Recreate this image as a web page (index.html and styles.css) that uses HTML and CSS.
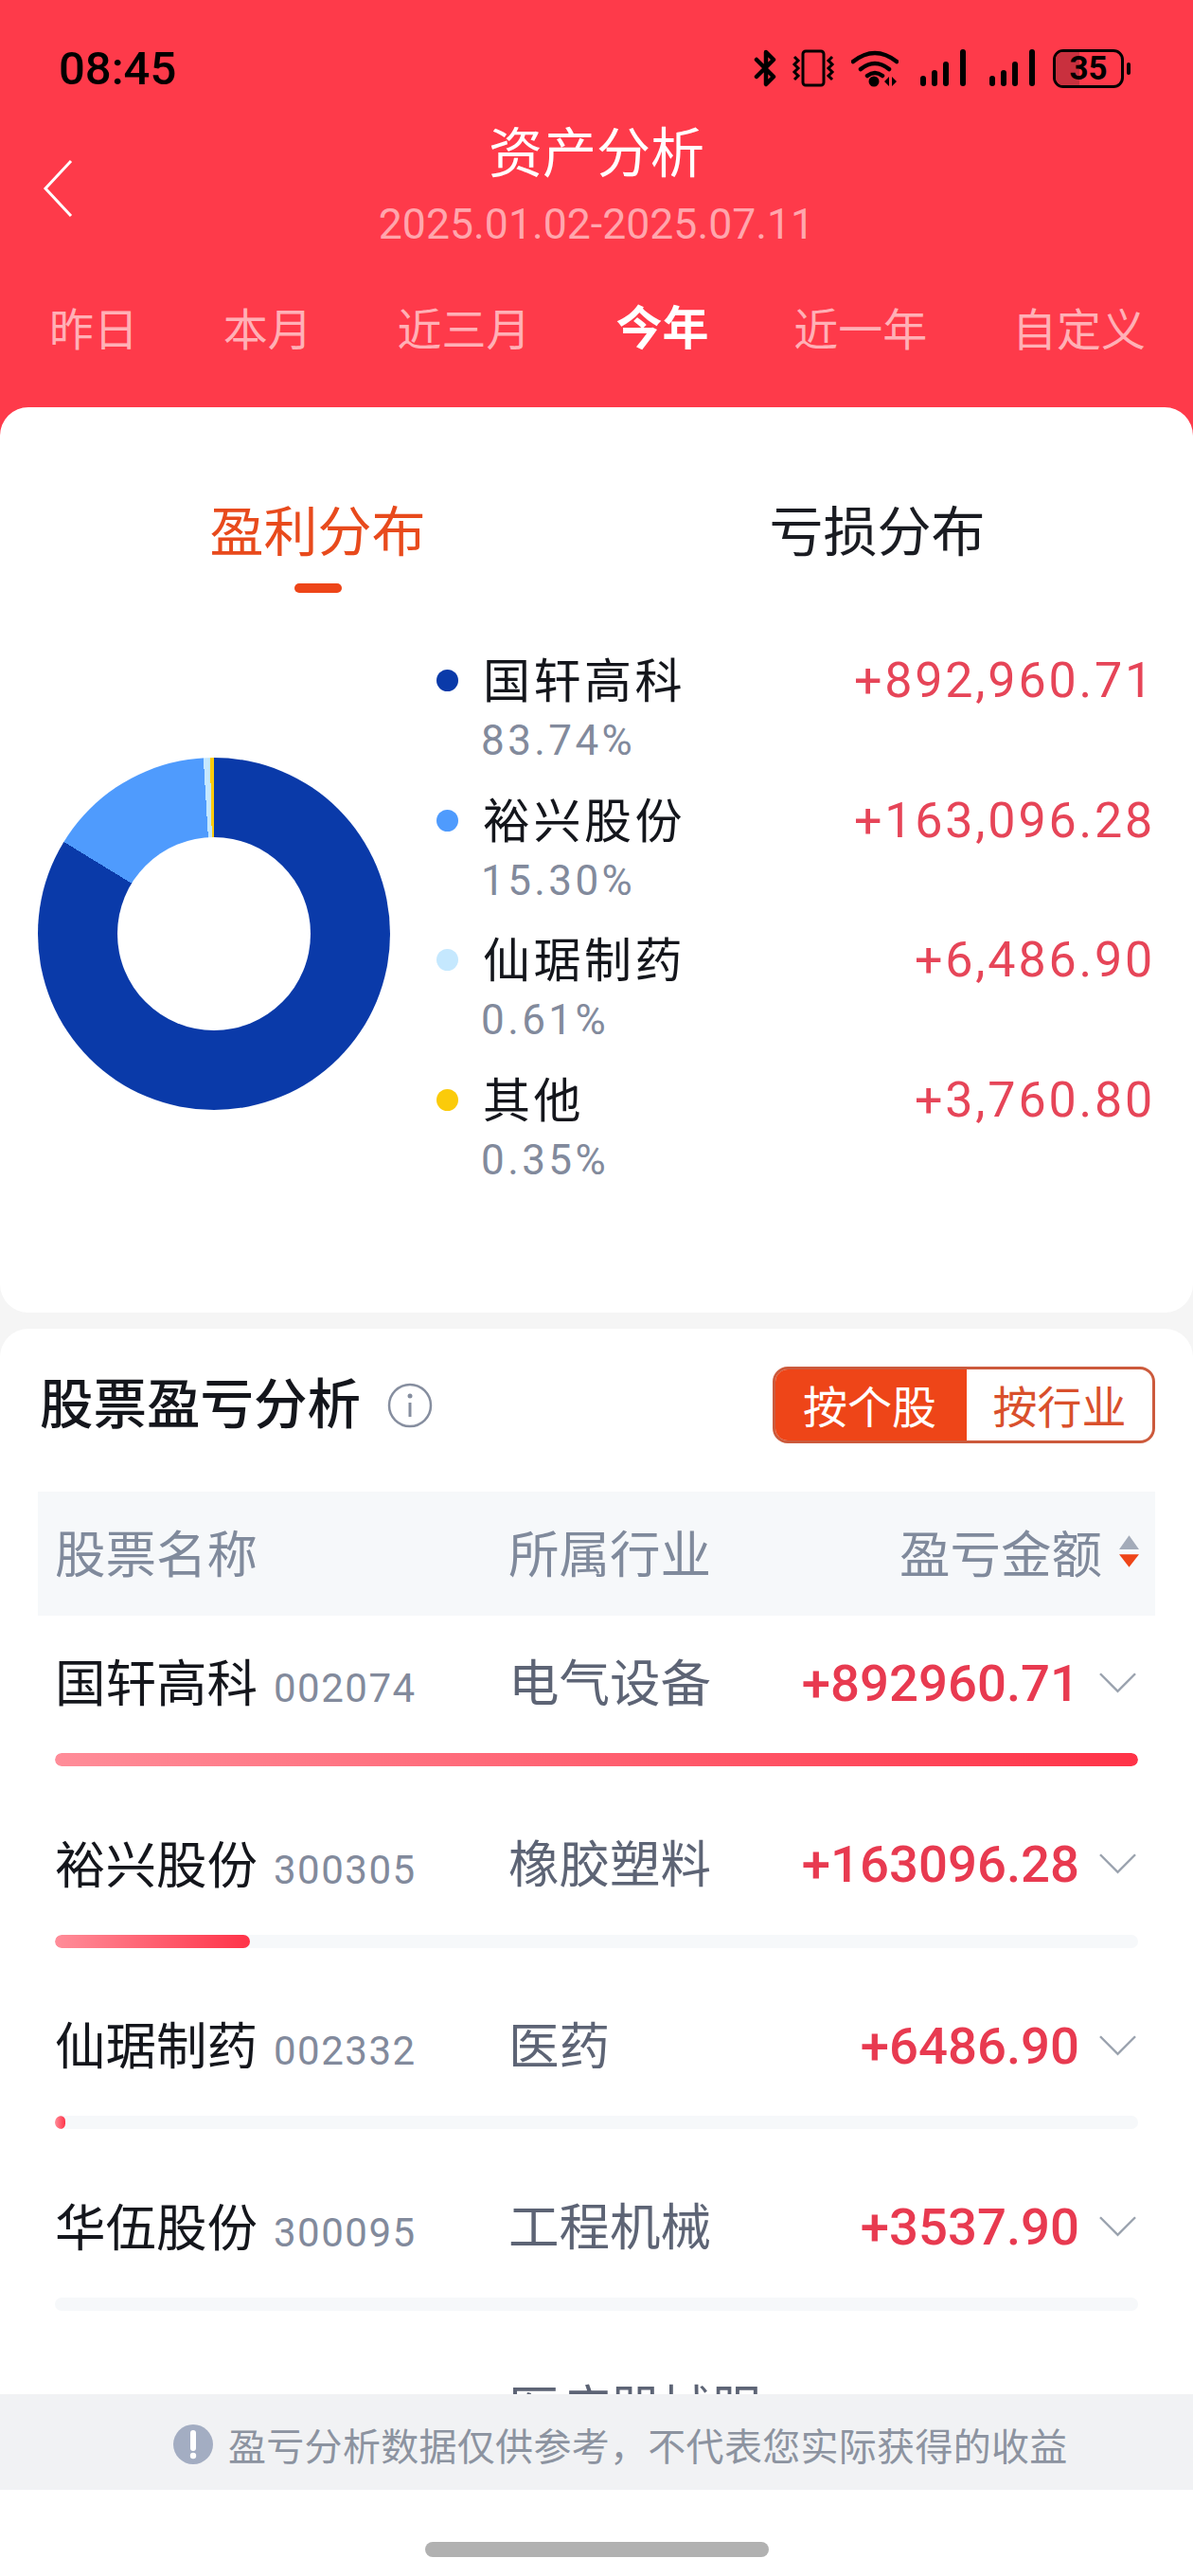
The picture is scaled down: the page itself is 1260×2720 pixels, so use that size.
FILE: index.html
```html
<!DOCTYPE html>
<html lang="zh-CN">
<head>
    <meta charset="UTF-8">
    <meta name="viewport" content="width=device-width, initial-scale=1.0">
    <title>资产分析</title>
    <link rel="stylesheet" href="styles.css">
</head>
<body>
    <div class="app">
        <header class="top">
            <div class="status-bar">
                <span class="clock">08:45</span>
                <div class="status-icons">
                    <svg class="ico-bt" viewBox="0 0 26 40"><path d="M3 11 L21 29 L13 37 V3 L21 11 L3 29" fill="none" stroke="#000" stroke-width="4.5" stroke-linejoin="round" stroke-linecap="round"/></svg>
                    <svg class="ico-vib" viewBox="0 0 46 40"><rect x="12" y="2" width="22" height="36" rx="3" fill="none" stroke="#000" stroke-width="3"/><path d="M3 8 L7 12 L3 16 L7 20 L3 24 L7 28 L3 32 M43 8 L39 12 L43 16 L39 20 L43 24 L39 28 L43 32" fill="none" stroke="#000" stroke-width="3"/></svg>
                    <svg class="ico-wifi" viewBox="0 0 50 40"><path d="M2 13 Q25 -5 48 13 M10 21 Q25 9 40 21 M17 28 Q25 22 33 28" fill="none" stroke="#000" stroke-width="4.5" stroke-linecap="round"/><circle cx="24" cy="34" r="5.5"/><path d="M35 34 L40 29 V39 Z M43 29 L48 34 L43 39 Z"/></svg>
                    <svg class="ico-sig" viewBox="0 0 49 40"><g fill="none" stroke="#000" stroke-width="6" stroke-linecap="round"><path d="M3 31 V36"/><path d="M15 25 V36"/><path d="M27 16 V36"/><path d="M45 3 V36"/></g></svg>
                    <svg class="ico-sig" viewBox="0 0 49 40"><g fill="none" stroke="#000" stroke-width="6" stroke-linecap="round"><path d="M3 31 V36"/><path d="M15 25 V36"/><path d="M27 16 V36"/><path d="M45 3 V36"/></g></svg>
                    <div class="battery"><i class="battery-fill"></i><span>35</span></div>
                    <i class="battery-tip"></i>
                </div>
            </div>
            <div class="nav">
                <svg class="back" viewBox="0 0 32 62"><path d="M30 2 L3 31 L30 60" fill="none" stroke="#fff" stroke-width="3"/></svg>
                <h1>资产分析</h1>
                <div class="range">2025.01.02-2025.07.11</div>
            </div>
            <div class="periods">
                <span>昨日</span>
                <span>本月</span>
                <span>近三月</span>
                <span class="on">今年</span>
                <span>近一年</span>
                <span>自定义</span>
            </div>
        </header>

        <section class="card dist">
            <div class="dist-tabs">
                <div class="dist-tab on">盈利分布</div>
                <div class="dist-tab">亏损分布</div>
            </div>
            <div class="dist-body">
                <div class="donut"></div>
                <ul class="legend">
                    <li>
                        <i class="dot c1"></i>
                        <div class="legend-text"><b>国轩高科</b><small>83.74%</small></div>
                        <span class="legend-val">+892,960.71</span>
                    </li>
                    <li>
                        <i class="dot c2"></i>
                        <div class="legend-text"><b>裕兴股份</b><small>15.30%</small></div>
                        <span class="legend-val">+163,096.28</span>
                    </li>
                    <li>
                        <i class="dot c3"></i>
                        <div class="legend-text"><b>仙琚制药</b><small>0.61%</small></div>
                        <span class="legend-val">+6,486.90</span>
                    </li>
                    <li>
                        <i class="dot c4"></i>
                        <div class="legend-text"><b>其他</b><small>0.35%</small></div>
                        <span class="legend-val">+3,760.80</span>
                    </li>
                </ul>
            </div>
        </section>

        <section class="card stocks">
            <div class="stocks-head">
                <h2>股票盈亏分析</h2>
                <svg class="info" viewBox="0 0 48 48"><circle cx="24" cy="24" r="22" fill="none" stroke="#868e9f" stroke-width="2.5"/><circle cx="24" cy="14" r="2.5" fill="#868e9f"/><path d="M24 21 V36" stroke="#868e9f" stroke-width="3"/></svg>
                <div class="toggle">
                    <span class="on">按个股</span>
                    <span>按行业</span>
                </div>
            </div>
            <div class="thead">
                <span class="col-name">股票名称</span>
                <span class="col-ind">所属行业</span>
                <span class="col-amt">盈亏金额
                    <svg class="sort" viewBox="0 0 22 34"><path d="M11 1 L21 15 H1 Z" fill="#a3abb9"/><path d="M1 20 H21 L11 33 Z" fill="#ee4518"/></svg>
                </span>
            </div>

            <div class="row">
                <div class="row-main">
                    <span class="col-name">国轩高科<em>002074</em></span>
                    <span class="col-ind">电气设备</span>
                    <span class="col-amt"><strong>+892960.71</strong><svg class="chev" viewBox="0 0 40 22"><path d="M1 1 L20 20 L39 1" fill="none" stroke="#9aa2ae" stroke-width="2.5"/></svg></span>
                </div>
                <div class="bar"><div class="bar-fill" style="width:100%"></div></div>
            </div>
            <div class="row">
                <div class="row-main">
                    <span class="col-name">裕兴股份<em>300305</em></span>
                    <span class="col-ind">橡胶塑料</span>
                    <span class="col-amt"><strong>+163096.28</strong><svg class="chev" viewBox="0 0 40 22"><path d="M1 1 L20 20 L39 1" fill="none" stroke="#9aa2ae" stroke-width="2.5"/></svg></span>
                </div>
                <div class="bar"><div class="bar-fill" style="width:18%"></div></div>
            </div>
            <div class="row">
                <div class="row-main">
                    <span class="col-name">仙琚制药<em>002332</em></span>
                    <span class="col-ind">医药</span>
                    <span class="col-amt"><strong>+6486.90</strong><svg class="chev" viewBox="0 0 40 22"><path d="M1 1 L20 20 L39 1" fill="none" stroke="#9aa2ae" stroke-width="2.5"/></svg></span>
                </div>
                <div class="bar"><div class="bar-fill" style="width:1%"></div></div>
            </div>
            <div class="row">
                <div class="row-main">
                    <span class="col-name">华伍股份<em>300095</em></span>
                    <span class="col-ind">工程机械</span>
                    <span class="col-amt"><strong>+3537.90</strong><svg class="chev" viewBox="0 0 40 22"><path d="M1 1 L20 20 L39 1" fill="none" stroke="#9aa2ae" stroke-width="2.5"/></svg></span>
                </div>
                <div class="bar"></div>
            </div>
            <div class="row">
                <div class="row-main">
                    <span class="col-name"></span>
                    <span class="col-ind">医疗器械服</span>
                </div>
            </div>
        </section>

        <div class="notice">
            <svg class="notice-ico" viewBox="0 0 42 42"><circle cx="21" cy="21" r="21" fill="#a3adc2"/><path d="M21 9 V25" stroke="#fff" stroke-width="6" stroke-linecap="round"/><circle cx="21" cy="33" r="3.2" fill="#fff"/></svg>
            <span>盈亏分析数据仅供参考，不代表您实际获得的收益</span>
        </div>
        <div class="home-area"><i class="home-bar"></i></div>
    </div>
</body>
</html>
```

FILE: styles.css
```css
* {
    box-sizing: border-box;
}
body {
    margin: 0;
    background-color: #f5f5f5;
    font-family: "Noto Sans CJK SC", Roboto, sans-serif;
}
ul {
    list-style: none;
    margin: 0;
    padding: 0;
}
.app {
    position: relative;
    width: 1260px;
    height: 2720px;
    overflow: hidden;
    background-color: #f5f5f5;
}

/* red header */
.top {
    height: 460px;
    background-color: #fe3a4a;
    color: #fff;
}
.status-bar {
    display: flex;
    align-items: center;
    justify-content: space-between;
    height: 92px;
    padding: 52px 66px 0 62px;
}
.clock {
    font-family: Roboto, sans-serif;
    font-size: 49px;
    font-weight: 500;
    color: #000;
}
.status-icons {
    display: flex;
    align-items: center;
}
.status-icons svg {
    height: 40px;
    display: block;
}
.ico-bt { width: 26px; margin-right: 14px; }
.ico-vib { width: 46px; margin-right: 17px; }
.ico-wifi { width: 50px; margin-right: 23px; }
.ico-sig { width: 49px; margin-right: 24px; }
.ico-sig + .battery { margin-left: -6px; }
.battery {
    position: relative;
    width: 75px;
    height: 41px;
    border: 3px solid #000;
    border-radius: 11px;
    overflow: hidden;
    text-align: center;
    font-family: Roboto, sans-serif;
    font-size: 35px;
    font-weight: 700;
    line-height: 35px;
    color: #000;
}
.battery span {
    position: relative;
}
.battery-fill {
    position: absolute;
    left: 0;
    top: 0;
    bottom: 0;
    width: 25px;
    background-color: #c9303e;
}
.battery-tip {
    width: 4px;
    height: 13px;
    margin-left: 3px;
    border-radius: 2px;
    background-color: #000;
}
.nav {
    position: relative;
    text-align: center;
    padding-top: 33px;
}
.nav h1 {
    margin: 0;
    font-size: 57px;
    font-weight: 400;
    line-height: 64px;
}
.back {
    position: absolute;
    left: 45px;
    top: 76px;
    width: 32px;
    height: 62px;
}
.range {
    margin-top: 22px;
    font-family: Roboto, sans-serif;
    font-size: 44.6px;
    line-height: 52px;
    color: #ffa6ad;
}
.periods {
    display: flex;
    justify-content: space-between;
    align-items: center;
    padding: 48px 50px 0 52px;
    font-size: 47px;
    line-height: 64px;
    color: #ffb0b6;
}
.periods .on {
    margin-bottom: 4px;
    font-size: 49px;
    font-weight: 700;
    color: #fff;
}

/* cards */
.card {
    background-color: #fff;
    border-radius: 30px;
}
.dist {
    height: 956px;
    margin-top: -30px;
}
.dist-tabs {
    display: flex;
    padding: 85px 38px 0 40px;
}
.dist-tab {
    flex: 1;
    text-align: center;
    font-size: 57px;
    line-height: 84px;
    color: #1a1c22;
}
.dist-tab.on {
    position: relative;
    color: #e84a1c;
}
.dist-tab.on::after {
    content: "";
    position: absolute;
    left: 50%;
    top: 101px;
    width: 50px;
    height: 10px;
    margin-left: -25px;
    border-radius: 5px;
    background-color: #ee4518;
}
.dist-body {
    display: flex;
    padding: 0 40px;
}
.donut {
    flex: none;
    position: relative;
    width: 372px;
    height: 372px;
    margin-top: 201px;
    border-radius: 50%;
    background: conic-gradient(#0a3aa9 0 83.74%, #4f9bfd 83.74% 99.04%, #c5e8fe 99.04% 99.65%, #fbcb0a 99.65% 100%);
}
.donut::after {
    content: "";
    position: absolute;
    left: 84px;
    top: 84px;
    width: 204px;
    height: 204px;
    border-radius: 50%;
    background-color: #fff;
}
.legend {
    flex: 1;
    padding: 80px 0 0 49px;
}
.legend li {
    display: flex;
    height: 147.5px;
}
.dot {
    flex: none;
    width: 23px;
    height: 23px;
    margin-top: 28px;
    margin-right: 26px;
    border-radius: 50%;
}
.c1 { background-color: #0a3aa9; }
.c2 { background-color: #4f9bfd; }
.c3 { background-color: #c5e8fe; }
.c4 { background-color: #fbcb0a; }
.legend-text {
    flex: 1;
}
.legend-text b {
    display: block;
    font-size: 50px;
    font-weight: 400;
    letter-spacing: 3.5px;
    line-height: 72px;
    color: #14161c;
}
.legend-text small {
    display: block;
    margin: 7px 0 0 -2px;
    font-family: Roboto, sans-serif;
    font-size: 44px;
    letter-spacing: 3.4px;
    line-height: 48px;
    color: #828a9c;
}
.legend-val {
    margin-top: 4px;
    font-family: Roboto, sans-serif;
    font-size: 52px;
    letter-spacing: 2.8px;
    line-height: 72px;
    color: #e64558;
}

/* stock table */
.stocks {
    margin-top: 17px;
    padding: 0 40px;
    height: 1400px;
}
.stocks-head {
    display: flex;
    align-items: center;
    height: 172px;
    padding: 0 0 11px 2px;
}
.stocks-head h2 {
    margin: 0 0 12px;
    font-size: 56.5px;
    font-weight: 500;
    color: #14161c;
}
.info {
    width: 48px;
    height: 48px;
    margin-left: 28px;
}
.toggle {
    display: flex;
    width: 404px;
    height: 81px;
    margin-left: auto;
    border: 3px solid #cc5a3c;
    border-radius: 16px;
    overflow: hidden;
    font-size: 47px;
    line-height: 73px;
    color: #d9502c;
    text-align: center;
}
.toggle span {
    flex: 1;
}
.toggle .on {
    margin: -3px 0 -3px -3px;
    flex: none;
    width: 205px;
    line-height: 79px;
    background-color: #ee4518;
    color: #fff;
}
.thead {
    display: flex;
    align-items: center;
    height: 131px;
    padding: 0 18px;
    background-color: #f6f8fa;
    font-size: 53.5px;
    color: #808a9c;
}
.col-name {
    flex: none;
    display: flex;
    align-items: baseline;
    width: 479px;
}
.col-ind {
    flex: none;
    width: 290px;
    white-space: nowrap;
}
.col-amt {
    flex: 1;
    display: flex;
    align-items: center;
    justify-content: flex-end;
    white-space: nowrap;
}
.sort {
    width: 23px;
    height: 36px;
    margin-left: 17px;
}
.thead .col-name,
.thead .col-ind,
.thead .col-amt {
    margin-bottom: 6px;
}
.thead .col-amt {
    margin-right: -2px;
}
.row {
    height: 191.5px;
    padding: 0 18px;
}
.row-main {
    display: flex;
    align-items: center;
    height: 145px;
    font-size: 53.5px;
    color: #14161c;
}
.row-main .col-name,
.row-main .col-ind {
    margin-bottom: 10px;
}
.row-main em {
    margin-left: 17px;
    font-family: Roboto, sans-serif;
    font-style: normal;
    font-size: 42px;
    letter-spacing: 1.5px;
    color: #828a9c;
}
.row-main .col-ind {
    color: #5d6475;
    line-height: 64px;
}
.row-main strong {
    margin-bottom: 4px;
    font-family: Roboto, sans-serif;
    font-size: 54.5px;
    font-weight: 500;
    color: #e83a50;
}
.chev {
    flex: none;
    width: 39px;
    height: 22px;
    margin: 0 2px 4px 21px;
}
.bar {
    height: 14px;
    border-radius: 7px;
    background-color: #f6f8fa;
    overflow: hidden;
}
.bar-fill {
    height: 100%;
    border-radius: 7px;
    background: linear-gradient(90deg, #ff8d99, #ff3348);
}

/* bottom overlay */
.notice {
    position: absolute;
    left: 0;
    right: 0;
    top: 2528px;
    height: 101px;
    display: flex;
    align-items: center;
    padding: 4px 0 0 183px;
    background-color: #f1f2f4;
    font-size: 40px;
    letter-spacing: 0.3px;
    color: #8c93a0;
}
.notice-ico {
    width: 42px;
    height: 42px;
    margin-right: 16px;
}
.home-area {
    position: absolute;
    left: 0;
    right: 0;
    top: 2629px;
    bottom: 0;
    background-color: #fff;
}
.home-bar {
    position: absolute;
    left: 449px;
    top: 55px;
    width: 363px;
    height: 16px;
    border-radius: 8px;
    background-color: #b1b1b1;
}
```
